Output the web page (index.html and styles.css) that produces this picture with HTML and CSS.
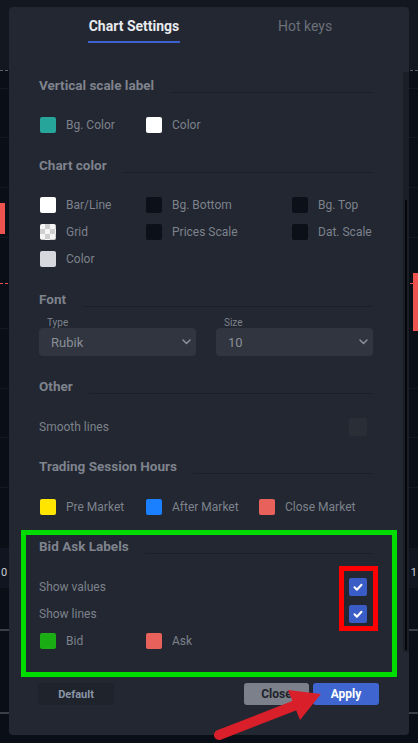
FILE: index.html
```html
<!DOCTYPE html>
<html>
<head>
<meta charset="utf-8">
<link rel="stylesheet" href="styles.css">
</head>
<body>
<div class="chart-bg">
  <div class="top-band"></div>
  <div class="hline dashed-white" style="top:70px"></div>
  <div class="hline grid" style="top:88px"></div>
  <div class="hline grid" style="top:137px"></div>
  <div class="hline grid" style="top:187px"></div>
  <div class="hline grid" style="top:237px"></div>
  <div class="hline dashed-red" style="top:283px"></div>
  <div class="hline grid" style="top:328px"></div>
  <div class="hline grid" style="top:388px"></div>
  <div class="hline grid" style="top:437px"></div>
  <div class="hline grid" style="top:487px"></div>
  <div class="band" style="top:548px"></div>
  <div class="hline grey" style="top:629px"></div>
  <div class="hline grey" style="top:712px"></div>
  <div class="candle left"></div>
  <div class="candle right"></div>
  <span class="axis-txt left-txt">0</span>
  <span class="axis-txt right-txt">1</span>
</div>

<div class="modal">
  <div class="tabs">
    <div class="tab active">Chart Settings</div>
    <div class="tab">Hot keys</div>
  </div>

  <div class="body">
    <div class="content">
      <section class="section">
        <div class="sec-head"><span>Vertical scale label</span><i class="rule"></i></div>
        <div class="row cols">
          <div class="item"><span class="sw teal"></span>Bg. Color</div>
          <div class="item"><span class="sw white"></span>Color</div>
        </div>
      </section>

      <section class="section">
        <div class="sec-head"><span>Chart color</span><i class="rule"></i></div>
        <div class="row cols">
          <div class="item"><span class="sw white"></span>Bar/Line</div>
          <div class="item"><span class="sw dark"></span>Bg. Bottom</div>
          <div class="item"><span class="sw dark"></span>Bg. Top</div>
        </div>
        <div class="row cols">
          <div class="item"><span class="sw checker"></span>Grid</div>
          <div class="item"><span class="sw dark"></span>Prices Scale</div>
          <div class="item"><span class="sw dark"></span>Dat. Scale</div>
        </div>
        <div class="row cols">
          <div class="item"><span class="sw light"></span>Color</div>
        </div>
      </section>

      <section class="section">
        <div class="sec-head compact"><span>Font</span><i class="rule"></i></div>
        <div class="fields">
          <div class="field">
            <div class="field-label">Type</div>
            <div class="select"><span>Rubik</span>
              <svg class="chev" width="9" height="6" viewBox="0 0 9 6"><path d="M1 1l3.5 3.5L8 1" fill="none" stroke="#8a8f98" stroke-width="1.5" stroke-linecap="round" stroke-linejoin="round"/></svg>
            </div>
          </div>
          <div class="field">
            <div class="field-label">Size</div>
            <div class="select"><span>10</span>
              <svg class="chev" width="9" height="6" viewBox="0 0 9 6"><path d="M1 1l3.5 3.5L8 1" fill="none" stroke="#8a8f98" stroke-width="1.5" stroke-linecap="round" stroke-linejoin="round"/></svg>
            </div>
          </div>
        </div>
      </section>

      <section class="section">
        <div class="sec-head"><span>Other</span><i class="rule"></i></div>
        <div class="row toggle">
          <span>Smooth lines</span>
          <span class="cb"></span>
        </div>
      </section>

      <section class="section">
        <div class="sec-head"><span>Trading Session Hours</span><i class="rule"></i></div>
        <div class="row cols trading">
          <div class="item"><span class="sw yellow"></span>Pre Market</div>
          <div class="item"><span class="sw blue"></span>After Market</div>
          <div class="item"><span class="sw red"></span>Close Market</div>
        </div>
      </section>

      <section class="section">
        <div class="sec-head"><span>Bid Ask Labels</span><i class="rule"></i></div>
        <div class="row toggle">
          <span>Show values</span>
          <span class="cb checked"><svg width="18" height="18" viewBox="0 0 18 18"><path d="M5.5 9.3l2.4 2.4 4.6-5" fill="none" stroke="#fff" stroke-width="2" stroke-linecap="round" stroke-linejoin="round"/></svg></span>
        </div>
        <div class="row toggle">
          <span>Show lines</span>
          <span class="cb checked"><svg width="18" height="18" viewBox="0 0 18 18"><path d="M5.5 9.3l2.4 2.4 4.6-5" fill="none" stroke="#fff" stroke-width="2" stroke-linecap="round" stroke-linejoin="round"/></svg></span>
        </div>
        <div class="row cols">
          <div class="item"><span class="sw green"></span>Bid</div>
          <div class="item"><span class="sw red"></span>Ask</div>
        </div>
      </section>
    </div>
    <div class="scrollbar"><div class="thumb"></div></div>
  </div>

  <div class="footer">
    <button class="btn default">Default</button>
    <button class="btn close">Close</button>
    <button class="btn apply">Apply</button>
  </div>
</div>

<div class="annot green-box"></div>
<div class="annot red-box"></div>
<svg class="arrow" width="418" height="743" viewBox="0 0 418 743">
  <line x1="219" y1="735" x2="296" y2="705" stroke="#d81f2a" stroke-width="10" stroke-linecap="round"/>
  <polygon points="321,694 288,690 300,720" fill="#d81f2a"/>
</svg>
</body>
</html>
```

FILE: styles.css
```css
html, body {
  margin: 0;
  height: 100%;
}
body {
  box-sizing: border-box;
  position: relative;
  overflow: hidden;
  padding: 7px 0 0 9px;
  background: #0a0e16;
  font-family: Roboto, "Liberation Sans", sans-serif;
}

/* background chart canvas */
.chart-bg { position: absolute; inset: 0; }
.top-band { position: absolute; left: 0; right: 0; top: 0; height: 70px; background: #131720; }
.hline { position: absolute; left: 0; right: 0; height: 1px; }
.hline.grid { background: #141822; }
.hline.grey { background: #3a3e47; height: 2px; }
.hline.dashed-white { border-top: 1px dashed #5c616b; height: 0; }
.hline.dashed-red { border-top: 1px dashed #ef5350; height: 0; }
.band { position: absolute; left: 0; right: 0; height: 40px; background: #111520; }
.candle { position: absolute; width: 5px; background: #ef5350; }
.candle.left { left: 0; top: 203px; height: 31px; }
.candle.right { right: 0; top: 273px; height: 58px; }
.axis-txt { position: absolute; top: 566px; font-size: 11px; color: #c9ccd2; }
.left-txt { left: 1px; }
.right-txt { right: 1px; }

/* modal */
.modal {
  position: relative;
  width: 400px;
  height: 728px;
  background: #222731;
  border-radius: 4px;
  display: flex;
  flex-direction: column;
}
.tabs {
  box-sizing: border-box;
  height: 65px;
  display: flex;
  align-items: flex-start;
  gap: 98px;
  padding: 11px 0 0 79px;
}
.tab {
  font-size: 14px;
  line-height: 16px;
  color: #6b7079;
  padding-bottom: 7px;
  border-bottom: 2px solid transparent;
  white-space: nowrap;
}
.tab.active {
  width: 92px;
  text-align: center;
  color: #e8eaee;
  font-weight: 700;
  border-bottom-color: #3d62d0;
}

.body {
  height: 580px;
  display: flex;
  overflow: hidden;
}
.content {
  flex: 1;
  padding: 2.5px 30px 0 30px;
}
.scrollbar {
  width: 6px;
  background: #1a1e26;
}
.thumb {
  width: 2px;
  height: 450px;
  margin: 128px 0 0 2px;
  background: #050609;
}

.section + .section { margin-top: 16px; }
.sec-head {
  display: flex;
  align-items: center;
  height: 20px;
  margin-bottom: 17px;
  font-size: 13.5px;
  font-weight: 700;
  color: #7f838d;
}
.sec-head.compact { margin-bottom: 9.5px; }
.rule {
  flex: 1;
  height: 1px;
  margin-left: 16px;
  align-self: flex-end;
  margin-bottom: 2px;
  background: #1b1f27;
}

.row {
  height: 27px;
  font-size: 12px;
  color: #7d828c;
}
.row.cols {
  display: grid;
  grid-template-columns: 106px 146px auto;
  align-items: center;
}
.row.cols.trading { grid-template-columns: 106px 113px auto; }
.item {
  display: flex;
  align-items: center;
  gap: 10px;
  padding-left: 1px;
}
.sw {
  width: 16px;
  height: 16px;
  border-radius: 2px;
  flex: none;
}
.sw.teal { background: #26a69a; }
.sw.white { background: #ffffff; }
.sw.dark { background: #0c1019; }
.sw.light { background: #d6d8dd; }
.sw.checker { background: repeating-conic-gradient(#cfcfcf 0 25%, #f5f5f5 0 50%) 0 0 / 10px 10px; }
.sw.yellow { background: #ffe500; }
.sw.blue { background: #1b80ff; }
.sw.red { background: #e8625b; }
.sw.green { background: #1aae14; }

.row.toggle {
  display: flex;
  align-items: center;
  justify-content: space-between;
}
.cb {
  width: 18px;
  height: 18px;
  border-radius: 2px;
  margin-right: 6px;
  background: #2a2e36;
  display: flex;
}
.cb.checked { background: #3a5cc6; }

.fields {
  display: grid;
  grid-template-columns: 1fr 1fr;
  gap: 20px;
  padding-bottom: 4px;
}
.field-label {
  font-size: 10px;
  line-height: 10px;
  color: #7d828c;
  padding-left: 8px;
}
.select {
  height: 28px;
  box-sizing: border-box;
  display: flex;
  align-items: center;
  justify-content: space-between;
  padding: 0 5px 0 12px;
  background: #30353f;
  border-radius: 4px;
  font-size: 13px;
  color: #8a8f98;
}

.footer {
  display: flex;
  align-items: center;
  gap: 4px;
  padding: 31px 30px 0 29px;
}
.btn {
  height: 22px;
  border: 0;
  border-radius: 3px;
  font-family: Roboto, "Liberation Sans", sans-serif;
  font-weight: 700;
  font-size: 12px;
  padding: 0;
}
.btn.default { width: 76px; background: #1f232b; color: #8996a8; font-size: 11px; }
.btn.close { width: 65px; margin-left: auto; background: #7b808b; color: #1e222a; }
.btn.apply { width: 66px; background: #3f66d0; color: #ffffff; }

/* screenshot annotations */
.annot { position: absolute; box-sizing: border-box; }
.green-box { left: 21px; top: 530px; width: 376px; height: 147px; border: 5px solid #00db00; }
.red-box { left: 339px; top: 566px; width: 39px; height: 65px; border: 5px solid #ff0000; }
.arrow { position: absolute; left: 0; top: 0; }
```
